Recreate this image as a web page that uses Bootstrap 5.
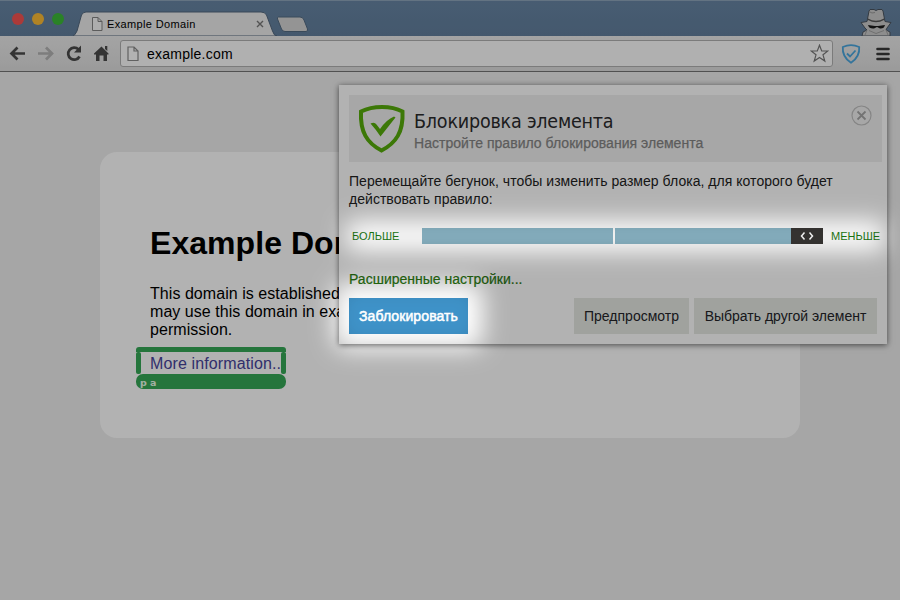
<!DOCTYPE html>
<html lang="ru">
<head>
<meta charset="utf-8">
<title>Example Domain</title>
<link href="https://cdn.jsdelivr.net/npm/bootstrap@5.3.0/dist/css/bootstrap.min.css" rel="stylesheet">
<style>
body{width:900px;height:600px;overflow:hidden;font-family:"Liberation Sans",Arial,sans-serif;background:#eeeeee;color:#000}
svg{display:block;flex:none}
.titlebar{height:36px;background:linear-gradient(#6785a4,#627f9d);border-top:1px solid #8fa5bb}
.lights{gap:8px;padding:12px 0 0 12px}
.light{width:12px;height:12px}
.tab-box{width:210px;height:25px;margin:10px 0 0 9px}
.tab-title{font-size:11px;line-height:14px;letter-spacing:.35px;left:34px;top:6px}
.toolbar{height:36px;background:linear-gradient(#ebebeb,#dedede);border-bottom:1px solid #747474;padding:0 10px 0 9px}
.omnibox{width:713px;height:27px;border:1px solid #b0b0b0;border-radius:3px;background:#fdfdfd;padding:0 3px 0 6px;margin-left:7px}
.address{font-size:14px;line-height:20px;letter-spacing:.23px;margin-left:8px}
.viewport{height:528px;padding:80px 100px 0}
.sheet{width:700px;height:286px;border-radius:17px;padding:73px 50px 0}
.sheet h1{font-size:32px;line-height:36px;margin:0 0 24px;letter-spacing:.05px}
.sheet p{font-size:16px;line-height:18px;margin:0;white-space:nowrap;letter-spacing:.05px}
.selection{left:136px;top:347px;width:150px;height:42px}
.sel-link{left:14px;top:7px;width:132px;font-size:16px;line-height:20px;color:#47449b;white-space:nowrap;letter-spacing:.12px}
.sel-top{height:5px;border-radius:3px 3px 0 0;background:#36a857}
.sel-side{width:5px;height:22px;border-radius:2px;background:#36a857}
.sel-tag{height:15px;border-radius:7px;background:#36a857;color:#e8fbe9;font:bold 9.5px/18px "DejaVu Sans",sans-serif;padding-left:4px}
.dialog-box{left:339px;top:85px;width:548px;height:259px;box-shadow:0 1px 6px rgba(0,0,0,.6);padding:10px 5px 0 10px;color:#222;font-size:14px}
.dialog-head{height:67px;background:#f0f0f0;padding:10px 10px 0 9px}
.head-title{font:19.5px/27px "DejaVu Sans Condensed","DejaVu Sans",sans-serif;font-stretch:condensed;letter-spacing:-.2px;color:#2a2a2c;margin-top:3px;white-space:nowrap}
.head-sub{line-height:17px;color:#858585;white-space:nowrap;letter-spacing:.03px;-webkit-text-stroke:.25px #858585}
.hint{line-height:18px;margin:10px 0 20px;white-space:nowrap;letter-spacing:.035px}
.slider-row{font-size:11px;line-height:16px;color:#1b7a12;height:16px;padding-left:3px}
.seg{background:#8bb6c7;height:16px}
.knob{width:32px;height:16px;background:#383634}
.more{line-height:18px;margin-top:26px;color:#297511;-webkit-text-stroke:.2px #297511}
.act{height:36px;border:0;border-radius:0;font-size:14px;line-height:36px;padding:0;background:#e5e9e3;color:#242429}
.act-main{background:#3f93c9;color:#fff;width:119px;letter-spacing:.1px;-webkit-text-stroke:.5px #fff}
.dimmer{z-index:10;pointer-events:none}
</style>
<script src="https://cdn.jsdelivr.net/npm/bootstrap@5.3.0/dist/js/bootstrap.bundle.min.js"></script>
</head>
<body class="position-relative">
<header class="titlebar d-flex">
  <div class="lights d-flex">
    <span class="light rounded-circle" style="background:#f55452"></span>
    <span class="light rounded-circle" style="background:#fdbc35"></span>
    <span class="light rounded-circle" style="background:#3dba38"></span>
  </div>
  <div class="tab-box position-relative">
    <svg class="position-absolute" width="210" height="25" viewBox="0 0 210 25">
      <path d="M-1 25Q2 25 4 20L8.500 4Q10 1 13 1H188Q192 1 193.500 4L199.500 20Q201 25 204 25Z" fill="#ececec" stroke="#52677e" stroke-width="1"/>
      <path d="M19.500 6.500h5.500l4 4v9h-9.500zM25 6.500v4h4" fill="#f8f8f8" stroke="#858585"/>
      <path d="M184 10l6 6m0-6l-6 6" stroke="#777" stroke-width="1.400"/>
    </svg>
    <span class="tab-title position-absolute text-nowrap">Example Domain</span>
  </div>
  <svg width="34" height="18" viewBox="0 0 34 18" style="margin:15px 0 0 -7px"><path d="M2.500 1H24Q27 1 28 4L31.500 13Q32 15.500 30 15.500H9Q6.500 15.500 5.500 13L1.500 3Q1 1 2.500 1Z" fill="#d4d4d4" stroke="#526a82"/></svg>
  <svg class="ms-auto" width="34" height="28" viewBox="0 0 34 28" style="margin:7px 7px 0 0">
    <path d="M10 3L11 1.500H15L17 2.500L19 1.500H23L24 3L25.500 11L26 13.500L32 14.500L28 20L27 22L31 24V28H3L4 24L8 22L6 20L2 14.500L8 13.500L8.500 11Z" fill="#cbcbcb" stroke="#4a545f" stroke-width="1"/>
    <path d="M9 10.500Q17 15 25 10.500V12Q17 16.500 9 12Z" fill="#555"/>
    <path d="M10 3.500L13 5L16 4.500" fill="none" stroke="#999"/>
    <path d="M9 17L16 18L19 18L26 17Q25 21 21 20.500L18 19L15 20.500Q10 21 9 17Z" fill="#1c1c1c"/>
    <path d="M10 22.500L17 25.500L25 22.500M8 22L6 27M27 22L29 27" fill="none" stroke="#a0a0a0"/>
  </svg>
</header>
<nav class="toolbar d-flex align-items-center">
  <svg width="104" height="24" viewBox="0 0 104 24" fill="none">
    <g stroke="#4b4b4b" stroke-width="2.700"><path d="M2.500 11.500H16M8.500 5.500L2.500 11.500L8.500 17.500"/><path stroke="#b3b3b3" d="M29 11.500H43M37 5.500L43 11.500L37 17.500"/><path d="M69.500 7.500A6 6 0 1 0 70.500 14.500"/></g>
    <path d="M65 10.500h7V3.500z" fill="#4b4b4b"/>
    <path d="M92.500 4.500L99.500 11.500V12.500H98V19H94.500V13.500H90.500V19H87V12.500H85V11.500ZM96 4h2.300v5l-2.300-2z" fill="#4b4b4b"/>
  </svg>
  <div class="omnibox d-flex align-items-center">
    <svg width="12" height="16" viewBox="0 0 12 16"><path d="M1 1h6l4 4v9.500H1zM7 1v4h4" fill="#fff" stroke="#8b8b8b" stroke-width="1.200"/></svg>
    <span class="address">example.com</span>
    <svg class="ms-auto" width="19" height="19" viewBox="0 0 19 19"><path d="M9.500 1.200L11.700 7H17.800L13 10.800L14.800 17L9.500 13.400L4.200 17L6 10.800L1.200 7H7.300Z" fill="#fff" stroke="#777" stroke-width="1.200"/></svg>
  </div>
  <svg width="20" height="20" viewBox="0 0 20 20" style="margin-left:8px" fill="none" stroke="#4aa6de" stroke-width="1.800"><path d="M10 1.200Q14 1.200 18.200 3Q19 13 10 18.700Q1 13 1.800 3Q6 1.200 10 1.200Z"/><path d="M6 9.500L9 12.500L14.500 6.500"/></svg>
  <svg width="14" height="16" viewBox="0 0 14 16" style="margin-left:15px"><path d="M1.500 3h11M1.500 8h11M1.500 13h11" stroke="#3a3a3a" stroke-width="2.600" stroke-linecap="round"/></svg>
</nav>
<main class="viewport">
  <section class="sheet bg-white">
    <h1 class="fw-bold">Example Domain</h1>
    <p>This domain is established to be used for illustrative examples in documents. You<br>may use this domain in examples without prior coordination or asking for<br>permission.</p>
  </section>
</main>
<div class="selection position-absolute">
  <div class="sel-top"></div>
  <div class="d-flex justify-content-between"><div class="sel-side"></div><div class="sel-side"></div></div>
  <div class="sel-tag">p a</div>
  <a class="sel-link position-absolute text-decoration-none">More information..</a>
</div>
<section class="dialog-box position-absolute bg-white">
  <div class="dialog-head d-flex">
    <svg width="48" height="49" viewBox="0 0 48 49"><path d="M24 2Q36 2 44.500 6.500C45.500 27 38 38 23.500 45.500C9 38 2 27 3 6.500Q12 2 24 2Z" fill="none" stroke="#57ac0b" stroke-width="4"/><path d="M12.500 18.500Q16.500 16.500 18.500 19.500L22 24Q28.500 14.500 36 11.500L37.500 12.500L22.500 31.500Q17.500 24 12.500 18.500Z" fill="#57ac0b"/></svg>
    <div style="margin-left:8px">
      <div class="head-title">Блокировка элемента</div>
      <div class="head-sub">Настройте правило блокирования элемента</div>
    </div>
    <svg class="ms-auto" width="21" height="21" viewBox="0 0 21 21" fill="none" stroke="#bfbfbf"><circle cx="10.500" cy="10.500" r="9.500" stroke-width="1.200"/><path d="M6.500 6.500l8 8m0-8l-8 8" stroke="#a5a5a5" stroke-width="1.800"/></svg>
  </div>
  <div class="hint">Перемещайте бегунок, чтобы изменить размер блока, для которого будет<br>действовать правило:</div>
  <div class="slider-row d-flex">
    <span style="width:70px">БОЛЬШЕ</span>
    <span class="seg" style="width:191px"></span><span class="seg" style="width:176px;margin-left:2px"></span>
    <span class="knob"><svg width="32" height="16" viewBox="0 0 32 16" fill="none" stroke="#fff" stroke-width="1.500"><path d="M13.500 4.500L10.500 8L13.500 11.500M18.500 4.500L21.500 8L18.500 11.500"/></svg></span>
    <span style="margin-left:8px">МЕНЬШЕ</span>
  </div>
  <div class="more">Расширенные настройки...</div>
  <div class="d-flex" style="margin-top:10px;padding-right:5px">
    <button class="btn act act-main">Заблокировать</button>
    <button class="btn act ms-auto" style="width:115px">Предпросмотр</button>
    <button class="btn act" style="width:183px;margin-left:5px">Выбрать другой элемент</button>
  </div>
</section>
<svg class="dimmer position-absolute top-0 start-0" width="900" height="600" viewBox="0 0 900 600">
  <defs>
    <filter id="soft" filterUnits="userSpaceOnUse" x="200" y="150" width="760" height="280"><feGaussianBlur stdDeviation="12"/></filter>
    <mask id="spots" maskUnits="userSpaceOnUse" x="0" y="0" width="900" height="600">
      <rect width="900" height="600" fill="#fff"/>
      <g filter="url(#soft)"><rect x="345" y="221" width="541" height="30" rx="10"/><rect x="334" y="283" width="149" height="66" rx="12"/></g>
    </mask>
  </defs>
  <rect width="900" height="600" fill="#000" fill-opacity=".3" mask="url(#spots)"/>
</svg>
</body>
</html>
